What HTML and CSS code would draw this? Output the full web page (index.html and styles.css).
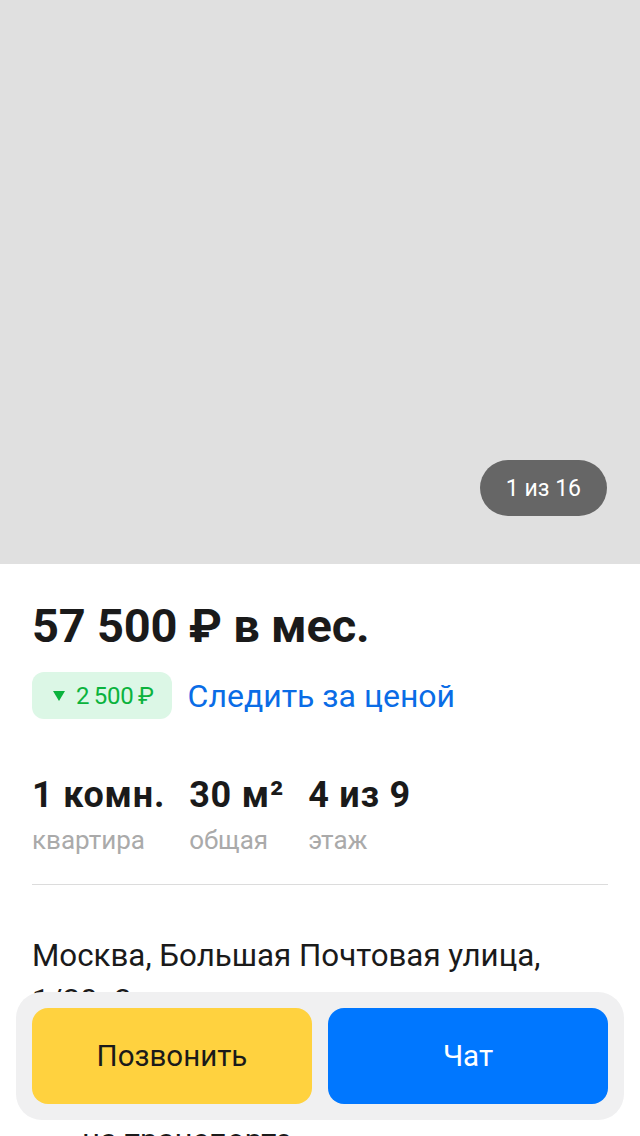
FILE: index.html
```html
<!DOCTYPE html>
<html lang="ru">
<head>
<meta charset="utf-8">
<link rel="stylesheet" href="styles.css">
</head>
<body>
<div class="page">
  <div class="gallery">
    <div class="counter">1 из 16</div>
  </div>
  <div class="content">
    <h1 class="price">57 500 ₽ в мес.</h1>
    <div class="price-row">
      <div class="diff"><span class="tri"></span>2&#8201;500&#8201;₽</div>
      <a class="follow">Следить за ценой</a>
    </div>
    <div class="specs">
      <div class="spec"><div class="val">1 комн.</div><div class="lbl">квартира</div></div>
      <div class="spec"><div class="val">30 м²</div><div class="lbl">общая</div></div>
      <div class="spec"><div class="val">4 из 9</div><div class="lbl">этаж</div></div>
    </div>
    <div class="divider"></div>
    <div class="address">Москва, Большая Почтовая улица, 1/20с2</div>
    <div class="metro">
      <div class="metro-line">Бауманская, 15 мин.</div>
      <div class="metro-time">на транспорте</div>
    </div>
  </div>
</div>
<div class="actions">
  <button class="btn call">Позвонить</button>
  <button class="btn chat">Чат</button>
</div>
</body>
</html>
```
FILE: styles.css
```css
html, body {
  margin: 0;
  padding: 0;
  background: #fff;
  font-family: Roboto, "Noto Sans", sans-serif;
  color: #1a1a1a;
}
.page {
  width: 640px;
  height: 1136px;
  overflow: hidden;
}
.gallery {
  height: 564px;
  background: #e0e0e0;
  position: relative;
}
.counter {
  position: absolute;
  right: 33px;
  bottom: 48px;
  height: 56px;
  padding: 0 26px;
  border-radius: 28px;
  background: #666666;
  color: #fff;
  font-size: 23px;
  display: flex;
  align-items: center;
}
.content {
  padding: 0 32px;
}
.price {
  margin: 0;
  padding-top: 34px;
  font-size: 47px;
  line-height: 56px;
  font-weight: 700;
  color: #1a1a1a;
  letter-spacing: -0.2px;
}
.price-row {
  display: flex;
  align-items: center;
  gap: 16px;
  margin-top: 18px;
}
.diff {
  height: 47px;
  padding: 0 18px 0 21px;
  border-radius: 12px;
  background: #dcf7e6;
  color: #0bb33d;
  font-size: 24px;
  letter-spacing: -0.3px;
  display: flex;
  align-items: center;
  gap: 11px;
}
.tri {
  width: 0;
  height: 0;
  border-left: 6px solid transparent;
  border-right: 6px solid transparent;
  border-top: 10px solid #0bb33d;
}
.follow {
  color: #0a6ce6;
  font-size: 32px;
}
.specs {
  display: flex;
  gap: 24px;
  margin-top: 54px;
}
.val {
  font-size: 36px;
  font-weight: 700;
  line-height: 44px;
  letter-spacing: 0.8px;
}
.lbl {
  font-size: 26px;
  color: #aaaaaa;
  line-height: 34px;
  margin-top: 6px;
}
.divider {
  height: 1px;
  background: #dcdcdc;
  margin-top: 27px;
}
.address {
  margin-top: 48px;
  font-size: 31.3px;
  line-height: 45px;
  color: #1a1a1a;
}
.metro {
  margin-top: 52px;
  padding-left: 50px;
  font-size: 31.3px;
  line-height: 44px;
}
.actions {
  position: fixed;
  left: 16px;
  right: 16px;
  top: 992px;
  height: 128px;
  box-sizing: border-box;
  padding: 16px;
  background: #f0f0f1;
  border-radius: 26px;
  display: flex;
  gap: 16px;
}
.btn {
  flex: 1;
  border: none;
  border-radius: 16px;
  font-family: Roboto, "Noto Sans", sans-serif;
  font-size: 29.5px;
}
.call {
  background: #ffd23f;
  color: #1a1a1a;
}
.chat {
  background: #0077ff;
  color: #fff;
}
```
